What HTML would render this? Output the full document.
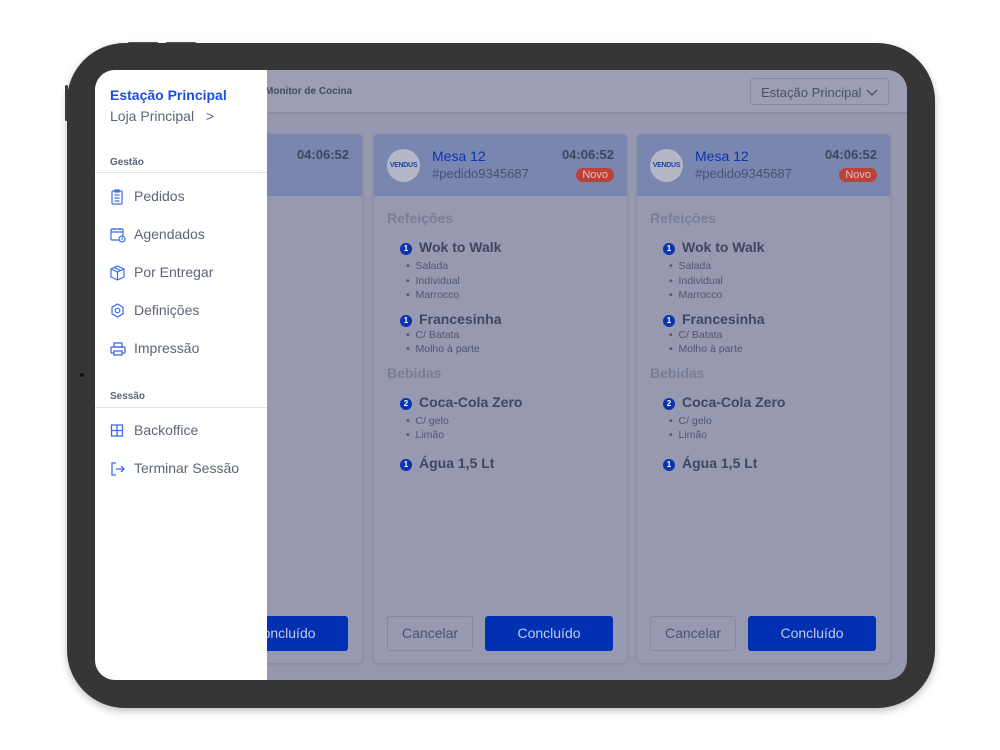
<!DOCTYPE html>
<html><head><meta charset="utf-8"><style>
*{box-sizing:border-box;margin:0;padding:0}
body{width:1000px;height:750px;background:#fff;position:relative;overflow:hidden;font-family:"Liberation Sans",sans-serif}
.dev{position:absolute;left:67px;top:43px;width:868px;height:665px;background:#363636;border-radius:58px;box-shadow:0 3px 8px rgba(0,0,0,.25)}
.btn1{position:absolute;top:42px;height:2px;background:#555;border-radius:1px}
.scr{position:absolute;left:95px;top:70px;width:812px;height:610px;background:#9698af;border-radius:20px;overflow:hidden}
.hdr{position:absolute;left:0;top:0;width:812px;height:44px;background:#9c9eb3;border-bottom:2px solid #8b8da3}
.sel{position:absolute;left:655px;top:8px;width:139px;height:27px;border:1px solid #878aa0;border-radius:3px;font-size:13px;color:#4a5068;padding:6px 0 0 10px}
.card{position:absolute;top:64px;width:253px;height:529px;background:#9799b0;border-radius:4px;box-shadow:0 1px 3px rgba(0,0,0,.15)}
.ch{height:62px;background:#7986b0;border-radius:4px 4px 0 0;position:relative}
.logo{position:absolute;left:13px;top:15px;width:33px;height:33px;border-radius:50%;background:#b4b7c6;color:#1d45a8;font-size:7px;font-weight:bold;text-align:center;line-height:33px;letter-spacing:-.3px}
.mesa{position:absolute;left:58px;top:14px;font-size:14px;color:#0a33b0}
.ped{position:absolute;left:58px;top:32px;font-size:13px;color:#4b5170}
.time{position:absolute;right:13px;top:13px;font-size:13px;font-weight:bold;color:#3f4560}
.novo{position:absolute;right:13px;top:34px;background:#bb4238;color:#e0c0c0;font-size:11px;border-radius:7px;padding:1px 6px}
.sec{position:absolute;left:13px;font-size:14px;font-weight:bold;color:#7a7e96}
.it{position:absolute;left:26px;font-size:14px;font-weight:bold;color:#40465f}
.it i{display:inline-block;width:12px;height:12px;border-radius:50%;background:#0a33b0;color:#fff;font-size:8px;font-style:normal;text-align:center;line-height:12px;margin-right:7px;vertical-align:1px}
.sub{position:absolute;left:32px;font-size:10.5px;color:#4f5570}
.cancel{position:absolute;left:13px;top:482px;width:86px;height:35px;border:1px solid #858898;border-radius:3px;font-size:14px;color:#4b5170;text-align:center;line-height:33px}
.ok{position:absolute;left:111px;top:482px;width:128px;height:35px;background:#0131b2;border-radius:3px;font-size:14px;color:#c0c8e4;text-align:center;line-height:35px}
.side{position:absolute;left:0;top:0;width:172px;height:610px;background:#fff}
.nav{position:absolute;left:15px;font-size:14px;color:#5d6479}
.nav svg{position:absolute;left:0;top:1px}
.nav span{position:absolute;left:24px;white-space:nowrap}
.lab{position:absolute;left:15px;font-size:10px;font-weight:bold;color:#5d6479}
.line{position:absolute;left:0;width:172px;height:1px;background:#e2e3e8}
</style></head><body>
<div class="btn1" style="left:128px;width:30px"></div>
<div class="btn1" style="left:166px;width:30px"></div>
<div style="position:absolute;left:65px;top:85px;width:3px;height:36px;background:#444;border-radius:2px"></div>
<div class="dev"></div>
<div style="position:absolute;left:80px;top:373px;width:4px;height:4px;border-radius:50%;background:#111"></div>
<div class="scr">
 <div class="hdr"><div style="position:absolute;left:170px;top:16px;font-size:10px;font-weight:bold;color:#454b63">Monitor de Cocina</div>
 <div class="sel">Estação Principal <svg width="12" height="8" style="position:absolute;right:10px;top:10px"><path d="M1 1l5 5 5-5" fill="none" stroke="#4a5068" stroke-width="1.3"/></svg></div></div>

 <div class="card" style="left:14px"><div class="ch"><div class="time">04:06:52</div></div>
 <div class="ok" style="left:111px">Concluído</div></div>

 <div class="card" style="left:279px">
  <div class="ch"><div class="logo">VENDUS</div><div class="mesa">Mesa 12</div><div class="ped">#pedido9345687</div><div class="time">04:06:52</div><div class="novo">Novo</div></div>
  <div class="sec" style="top:76px">Refeições</div>
  <div class="it" style="top:105px"><i>1</i>Wok to Walk</div>
  <div class="sub" style="top:126px">•&nbsp; Salada</div><div class="sub" style="top:141px">•&nbsp; Individual</div><div class="sub" style="top:155px">•&nbsp; Marrocco</div>
  <div class="it" style="top:177px"><i>1</i>Francesinha</div>
  <div class="sub" style="top:195px">•&nbsp; C/ Batata</div><div class="sub" style="top:209px">•&nbsp; Molho à parte</div>
  <div class="sec" style="top:231px">Bebidas</div>
  <div class="it" style="top:260px"><i>2</i>Coca-Cola Zero</div>
  <div class="sub" style="top:281px">•&nbsp; C/ gelo</div><div class="sub" style="top:295px">•&nbsp; Limão</div>
  <div class="it" style="top:321px"><i>1</i>Água 1,5 Lt</div>
  <div class="cancel">Cancelar</div><div class="ok">Concluído</div>
 </div>

 <div class="card" style="left:542px">
  <div class="ch"><div class="logo">VENDUS</div><div class="mesa">Mesa 12</div><div class="ped">#pedido9345687</div><div class="time">04:06:52</div><div class="novo">Novo</div></div>
  <div class="sec" style="top:76px">Refeições</div>
  <div class="it" style="top:105px"><i>1</i>Wok to Walk</div>
  <div class="sub" style="top:126px">•&nbsp; Salada</div><div class="sub" style="top:141px">•&nbsp; Individual</div><div class="sub" style="top:155px">•&nbsp; Marrocco</div>
  <div class="it" style="top:177px"><i>1</i>Francesinha</div>
  <div class="sub" style="top:195px">•&nbsp; C/ Batata</div><div class="sub" style="top:209px">•&nbsp; Molho à parte</div>
  <div class="sec" style="top:231px">Bebidas</div>
  <div class="it" style="top:260px"><i>2</i>Coca-Cola Zero</div>
  <div class="sub" style="top:281px">•&nbsp; C/ gelo</div><div class="sub" style="top:295px">•&nbsp; Limão</div>
  <div class="it" style="top:321px"><i>1</i>Água 1,5 Lt</div>
  <div class="cancel">Cancelar</div><div class="ok">Concluído</div>
 </div>

 <div class="side">
  <div style="position:absolute;left:15px;top:17px;font-size:14px;font-weight:bold;color:#1a4fe0">Estação Principal</div>
  <div style="position:absolute;left:15px;top:38px;font-size:14px;color:#5d6479">Loja Principal <span style="margin-left:8px">&gt;</span></div>
  <div class="lab" style="top:87px">Gestão</div><div class="line" style="top:102px"></div>
  <div class="nav" style="top:118px"><svg width="14" height="16" viewBox="0 0 14 16" fill="none" stroke="#3b6ce8" stroke-width="1.2"><rect x="2" y="2" width="10" height="13" rx="1"/><rect x="5" y="1" width="4" height="2"/><path d="M4.5 6h5M4.5 9h5M4.5 12h5"/></svg><span>Pedidos</span></div>
  <div class="nav" style="top:156px"><svg width="16" height="16" viewBox="0 0 16 16" fill="none" stroke="#3b6ce8" stroke-width="1.2"><rect x="1" y="2" width="12" height="11" rx="1"/><path d="M1 5h12M4 1v2M10 1v2"/><circle cx="12" cy="12" r="3" fill="#fff"/><path d="M12 10.5V12h1"/></svg><span>Agendados</span></div>
  <div class="nav" style="top:194px"><svg width="15" height="16" viewBox="0 0 15 16" fill="none" stroke="#3b6ce8" stroke-width="1.2"><path d="M7.5 1L14 4v8l-6.5 3L1 12V4zM1 4l6.5 3L14 4M7.5 7v8M4 2.5l6.5 3"/></svg><span>Por Entregar</span></div>
  <div class="nav" style="top:232px"><svg width="15" height="16" viewBox="0 0 15 16" fill="none" stroke="#3b6ce8" stroke-width="1.2"><path d="M7.5 1l5.5 3.2v6.6L7.5 14 2 10.8V4.2z"/><circle cx="7.5" cy="7.5" r="2.3"/></svg><span>Definições</span></div>
  <div class="nav" style="top:270px"><svg width="16" height="16" viewBox="0 0 16 16" fill="none" stroke="#3b6ce8" stroke-width="1.3"><rect x="4" y="2" width="8" height="4"/><rect x="1" y="6" width="14" height="6" rx="1"/><rect x="4" y="10" width="8" height="4" fill="#fff"/></svg><span>Impressão</span></div>
  <div class="lab" style="top:321px">Sessão</div><div class="line" style="top:337px"></div>
  <div class="nav" style="top:352px"><svg width="14" height="16" viewBox="0 0 14 16" fill="none" stroke="#3b6ce8" stroke-width="1.3"><rect x="1.5" y="2" width="11" height="11"/><path d="M7 2v11M1.5 7.5h11"/></svg><span>Backoffice</span></div>
  <div class="nav" style="top:390px"><svg width="16" height="16" viewBox="0 0 16 16" fill="none" stroke="#3b6ce8" stroke-width="1.3"><path d="M6 2H2v12h4M6 8h8M11 5l3 3-3 3"/></svg><span>Terminar Sessão</span></div>
 </div>
</div>
</body></html>
